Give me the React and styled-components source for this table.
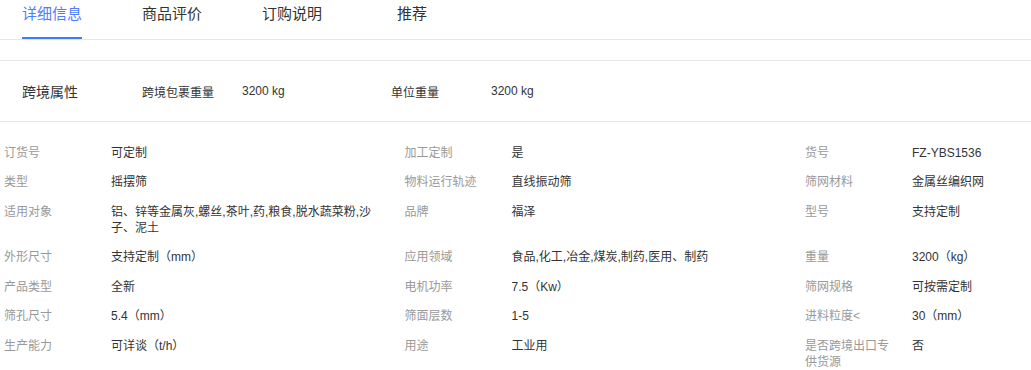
import React from 'react';
import styled, { createGlobalStyle } from 'styled-components';

const GlobalStyle = createGlobalStyle`
  body {
    margin: 0;
    background: #fff;
    font-family: "Liberation Sans", "Noto Sans CJK SC", sans-serif;
    color: #333;
  }
`;

const blue = '#3d7bfe';

const TabBar = styled.div`
  display: flex;
  gap: 60px;
  padding-left: 22px;
  height: 39px;
  border-bottom: 1px solid #e6e6e6;
`;

const Tab = styled.div`
  width: 60px;
  text-align: center;
  padding-top: 4px;
  cursor: pointer;
`;

const TabText = styled.span`
  display: inline-block;
  font-size: 15px;
  line-height: 20px;
  padding-bottom: 13px;
  color: ${({ active }) => (active ? '#4f7dff' : '#333')};
  border-bottom: 2px solid ${({ active }) => (active ? blue : 'transparent')};
`;

const CrossSection = styled.div`
  display: flex;
  align-items: center;
  height: 60px;
  margin-top: 20px;
  padding-left: 22px;
  border-top: 1px solid #e6e6e6;
  border-bottom: 1px solid #e6e6e6;
  font-size: 12px;
`;

const SectionTitle = styled.div`
  width: 120px;
  font-size: 14px;
  color: #333;
`;

const CrossCell = styled.div`
  width: ${({ w }) => w}px;
  color: #333;
`;

const SpecGrid = styled.div`
  display: grid;
  grid-template-columns: 400.5px 400.5px 1fr;
  padding: 16px 0 0 4px;
  font-size: 12px;
  line-height: 16px;
`;

const Spec = styled.div`
  display: flex;
  align-items: flex-start;
  padding: 6.75px 0;
`;

const SpecLabel = styled.div`
  flex: 0 0 90px;
  margin-right: 17px;
  color: #999;
`;

const SpecValue = styled.div`
  max-width: 266px;
  color: #333;
`;

const tabs = ['详细信息', '商品评价', '订购说明', '推荐'];

const specs = [
  ['订货号', '可定制'], ['加工定制', '是'], ['货号', 'FZ-YBS1536'],
  ['类型', '摇摆筛'], ['物料运行轨迹', '直线振动筛'], ['筛网材料', '金属丝编织网'],
  ['适用对象', '铝、锌等金属灰,螺丝,茶叶,药,粮食,脱水蔬菜粉,沙子、泥土'], ['品牌', '福泽'], ['型号', '支持定制'],
  ['外形尺寸', '支持定制（mm）'], ['应用领域', '食品,化工,冶金,煤炭,制药,医用、制药'], ['重量', '3200（kg）'],
  ['产品类型', '全新'], ['电机功率', '7.5（Kw）'], ['筛网规格', '可按需定制'],
  ['筛孔尺寸', '5.4（mm）'], ['筛面层数', '1-5'], ['进料粒度<', '30（mm）'],
  ['生产能力', '可详谈（t/h）'], ['用途', '工业用'], ['是否跨境出口专供货源', '否'],
];

export default function App() {
  return (
    <>
      <GlobalStyle />
      <TabBar>
        {tabs.map((t, i) => (
          <Tab key={t}>
            <TabText active={i === 0}>{t}</TabText>
          </Tab>
        ))}
      </TabBar>
      <CrossSection>
        <SectionTitle>跨境属性</SectionTitle>
        <CrossCell w={100}>跨境包裹重量</CrossCell>
        <CrossCell w={149}>3200 kg</CrossCell>
        <CrossCell w={100}>单位重量</CrossCell>
        <CrossCell w={149}>3200 kg</CrossCell>
      </CrossSection>
      <SpecGrid>
        {specs.map(([label, value]) => (
          <Spec key={label}>
            <SpecLabel>{label}</SpecLabel>
            <SpecValue>{value}</SpecValue>
          </Spec>
        ))}
      </SpecGrid>
    </>
  );
}
